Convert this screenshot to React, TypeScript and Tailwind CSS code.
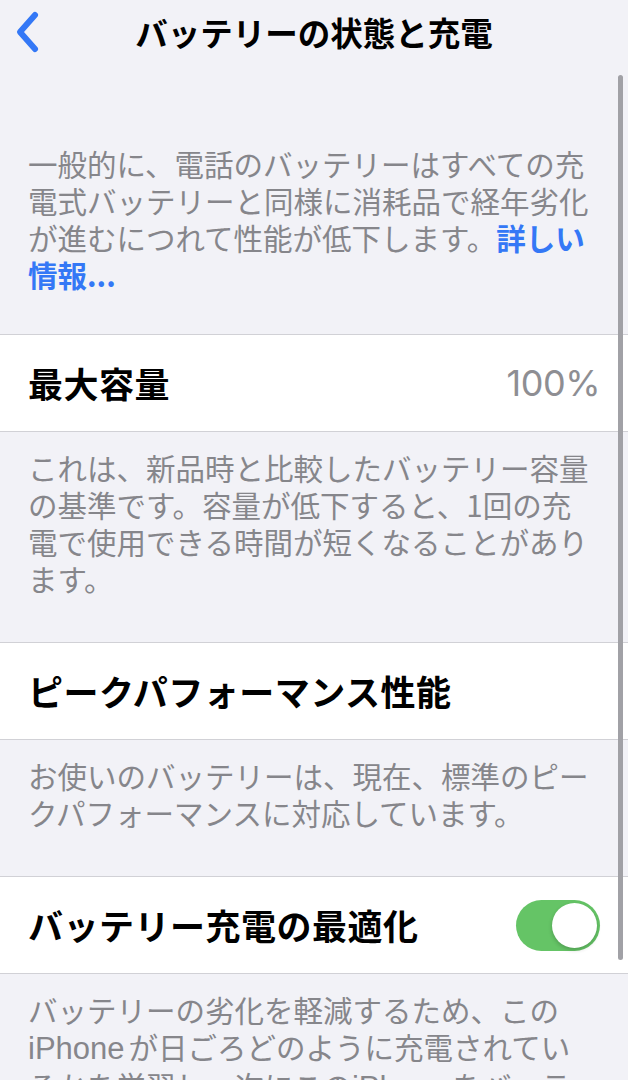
import { useState } from "react";

const jp = "font-['Hiragino_Sans','Noto_Sans_CJK_JP',sans-serif]";

function Footer({ children }: { children: React.ReactNode }) {
    return (
        <p className="pl-[28px] pr-[38px] pt-[17px] pb-[45px] text-[29.5px] leading-[37px] text-[#86868b]">
            {children}
        </p>
    );
}

function Row({ label, right }: { label: string; right?: React.ReactNode }) {
    return (
        <div className="h-[98px] bg-white border-y border-[#d1d1d6] flex items-center justify-between pl-[28px] pr-[28px]">
            <span className="text-[35px] font-bold text-black tracking-[0.5px]">{label}</span>
            {right}
        </div>
    );
}

function Toggle() {
    const [on, setOn] = useState(true);
    return (
        <button
            onClick={() => setOn((v) => !v)}
            className={`w-[84px] h-[51px] rounded-full p-[3px] flex transition ${
                on ? "bg-[#65c466] justify-end" : "bg-[#e5e5ea] justify-start"
            }`}
        >
            <span className="w-[45px] h-[45px] rounded-full bg-white shadow-[0_2px_4px_rgba(0,0,0,0.2)]" />
        </button>
    );
}

// 和文中の英字（iPhone）は少し大きめ・前後に余白
function Latin({ children }: { children: React.ReactNode }) {
    return <span className="font-['Liberation_Sans',sans-serif] text-[31px] mr-[4px]">{children}</span>;
}

export default function App() {
    return (
        <div className={`relative h-[1080px] overflow-hidden bg-[#f2f2f7] ${jp}`}>
            {/* ナビゲーションバー */}
            <div className="h-[64px] grid grid-cols-[1fr_auto_1fr] items-center">
                <div className="pl-[14px] flex items-center">
                    <svg width="26" height="44" viewBox="0 0 26 44" fill="none">
                        <path
                            d="M21 5 L6 22 L21 39"
                            stroke="#3478f6"
                            strokeWidth="6"
                            strokeLinecap="round"
                            strokeLinejoin="round"
                        />
                    </svg>
                </div>
                <h1 className="text-[32.5px] font-bold text-black">バッテリーの状態と充電</h1>
                <div />
            </div>

            {/* 説明 */}
            <p className="pl-[28px] pr-[38px] pt-[81px] pb-[41px] text-[29.5px] leading-[37px] text-[#86868b]">
                一般的に、電話のバッテリーはすべての充電式バッテリーと同様に消耗品で経年劣化が進むにつれて性能が低下します。
                <span className="text-[#3478f6] font-semibold">詳しい情報...</span>
            </p>

            <Row
                label="最大容量"
                right={<span className="text-[36px] text-[#8e8e93] font-['Inter',sans-serif] tracking-[-0.5px]">100%</span>}
            />
            <Footer>
                これは、新品時と比較したバッテリー容量の基準です。容量が低下すると、1回の充電で使用できる時間が短くなることがあります。
            </Footer>

            <Row label="ピークパフォーマンス性能" />
            <Footer>お使いのバッテリーは、現在、標準のピークパフォーマンスに対応しています。</Footer>

            <Row label="バッテリー充電の最適化" right={<Toggle />} />
            <Footer>
                バッテリーの劣化を軽減するため、この<Latin>iPhone</Latin>が日ごろどのように充電されているかを学習し、次にこの
                <Latin>iPhone</Latin>をバッテリー残量80%以上で使用すると予測されるときまで充電を待機します。
            </Footer>

            {/* スクロールインジケータ */}
            <div className="absolute right-[5px] top-[75px] w-[5px] h-[885px] rounded-full bg-[#a1a1a6]" />
        </div>
    );
}
